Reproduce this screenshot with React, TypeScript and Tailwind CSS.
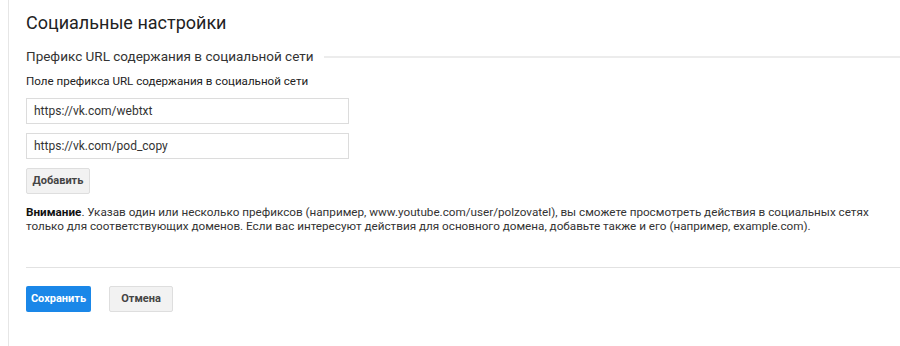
const font = { fontFamily: "Roboto, 'Liberation Sans', Arial, sans-serif" };

const UrlField = ({ value }: { value: string }) => (
    <div className="w-[323px] h-[26px] border border-[#dcdcdc] bg-white flex items-center px-[7px] text-[12px] text-[#333]">
        {value}
    </div>
);

const App = () => {
    const prefixes = ["https://vk.com/webtxt", "https://vk.com/pod_copy"];

    return (
        <div className="w-[900px] h-[346px] bg-white flex overflow-hidden" style={font}>
            {/* left rail */}
            <div className="w-[9px] border-r border-[#e6e6e6] shrink-0" />

            <div className="flex-1 pl-[17px] pt-[11px]">
                <h1 className="text-[18px] leading-[24px] text-[#222]">Социальные настройки</h1>

                <div className="flex items-center mt-[12px]">
                    <h2 className="text-[13.5px] leading-[18px] text-[#333] whitespace-nowrap">
                        Префикс URL содержания в социальной сети
                    </h2>
                    <div className="flex-1 ml-[10px] h-[2px] bg-[#ececec] mt-[1px]" />
                </div>

                <p className="text-[11.6px] leading-[14px] text-[#222] mt-[9px]">
                    Поле префикса URL содержания в социальной сети
                </p>

                <div className="flex flex-col gap-[9px] mt-[10px]">
                    {prefixes.map((p) => (
                        <UrlField key={p} value={p} />
                    ))}
                </div>

                <button className="mt-[9px] h-[26px] w-[64px] bg-[#f2f2f2] border border-[#dedede] rounded-[2px] text-[11px] font-bold text-[#444]">
                    Добавить
                </button>

                <p className="text-[11.7px] leading-[14px] text-[#333] mt-[11px] whitespace-nowrap">
                    <span className="font-bold text-[#111]">Внимание</span>. Указав один или несколько префиксов (например, www.youtube.com/user/polzovatel), вы сможете просмотреть действия в социальных сетях
                    <br />
                    только для соответствующих доменов. Если вас интересуют действия для основного домена, добавьте также и его (например, example.com).
                </p>

                <div className="h-px bg-[#e2e2e2] mt-[34px]" />

                <div className="flex gap-[18px] mt-[18px]">
                    <button className="h-[26px] w-[65px] bg-[#1a87e8] rounded-[2px] text-[11px] font-bold text-white">
                        Сохранить
                    </button>
                    <button className="h-[26px] w-[64px] bg-[#f2f2f2] border border-[#dedede] rounded-[2px] text-[11px] font-bold text-[#444]">
                        Отмена
                    </button>
                </div>
            </div>
        </div>
    );
};

export default App;
